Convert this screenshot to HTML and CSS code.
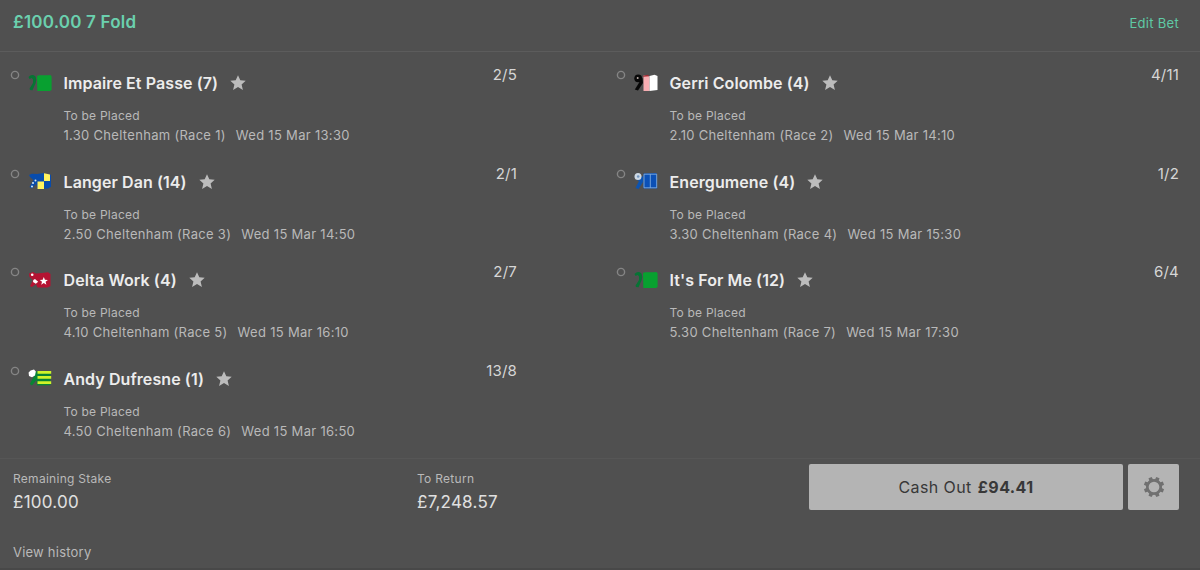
FILE: index.html
```
<!DOCTYPE html>
<html lang="en">
<head>
<meta charset="utf-8">
<title>My Bets</title>
<link rel="stylesheet" href="styles.css">
</head>
<body>
<svg width="0" height="0" class="defs">
  <symbol id="ring" viewBox="0 0 10 10"><circle cx="5" cy="5" r="3.6" fill="none" stroke="#858585" stroke-width="1.4"/></symbol>
  <symbol id="star" viewBox="0 0 16 16"><path fill="#bcbcbc" d="M8 .3l2.300 5 5.400.5-4.100 3.600 1.300 5.500L8 12.100l-4.900 2.800 1.300-5.500L.3 5.800l5.400-.5z"/></symbol>
  <symbol id="silk-green" viewBox="0 0 24 18"><path fill="#067434" d="M.5 3Q4-.5 7.500 2.500L8.300 6 7.500 9.500 4.500 16.300 2 16 1.600 14.500 5 9 5 5.500 3.800 4 1.500 5z"/><path fill="#08a030" d="M9 2L11 1.300h8.500L22.500 1 23.600 2.500V16L22 17H9.300z"/></symbol>
</svg>
<div class="slip">
  <header class="head"><span class="title">£100.00 7 Fold</span><span class="edit">Edit Bet</span></header>
  <main class="bets">
    <article class="bet">
      <svg class="ring"><use href="#ring"/></svg><svg class="silk"><use href="#silk-green"/></svg>
      <div class="info"><h2 class="name"><span>Impaire Et Passe (7)</span><svg class="star"><use href="#star"/></svg></h2><p class="market">To be Placed</p><p class="race"><span>1.30 Cheltenham (Race 1)</span><span>Wed 15 Mar 13:30</span></p></div>
      <span class="odds">2/5</span>
    </article>
    <article class="bet">
      <svg class="ring"><use href="#ring"/></svg>
      <svg class="silk" viewBox="0 0 24 18"><path fill="#080808" d="M8.500 4L9 9 4 16.500.8 15.500 5.500 8z"/><circle cx="4.200" cy="4.300" r="3.900" fill="#080808"/><circle cx="3.700" cy="4" r="1" fill="#b9aaa5"/><path fill="#f7adb2" d="M9.500 1.500l6 .7V17h-6z"/><path fill="#fff" d="M15.500 2l5-1.300 3 1.300v14l-8 1z"/><path d="M8.500 2L14 .8l1 1.400-5.500.5z" fill="#a62931"/></svg>
      <div class="info"><h2 class="name"><span>Gerri Colombe (4)</span><svg class="star"><use href="#star"/></svg></h2><p class="market">To be Placed</p><p class="race"><span>2.10 Cheltenham (Race 2)</span><span>Wed 15 Mar 14:10</span></p></div>
      <span class="odds">4/11</span>
    </article>
    <article class="bet">
      <svg class="ring"><use href="#ring"/></svg>
      <svg class="silk" viewBox="0 0 24 18"><path fill="#084cac" d="M1 3l3-1.200L9 2l7-1v1l7 .7v12L20 16.500l-10 .5-2-5-4 4.500L1.500 15l4-7-3.500-3z"/><path fill="#fff25e" d="M16 1.300l6 1.200V9h-6zM9.500 9.500H16V17H9.500z"/><circle cx="7.500" cy="8.500" r="1" fill="#d8e9f2"/><circle cx="5" cy="11" r="1" fill="#d8e9f2"/><circle cx="4" cy="14.500" r="1" fill="#d8e9f2"/></svg>
      <div class="info"><h2 class="name"><span>Langer Dan (14)</span><svg class="star"><use href="#star"/></svg></h2><p class="market">To be Placed</p><p class="race"><span>2.50 Cheltenham (Race 3)</span><span>Wed 15 Mar 14:50</span></p></div>
      <span class="odds">2/1</span>
    </article>
    <article class="bet">
      <svg class="ring"><use href="#ring"/></svg>
      <svg class="silk" viewBox="0 0 24 18"><path fill="#0c53b0" d="M3 8l6-4v6l-4.500 7-3-1L5 9z"/><circle cx="4" cy="4.500" r="3.500" fill="#cdd9e5"/><circle cx="4.200" cy="4.500" r="1.300" fill="#7396bf"/><path fill="#0b50b6" d="M9.500 1.500L22.500 1l.7 15.500H9.500z"/><path fill="none" stroke="#8db8e4" stroke-width=".8" d="M10 2.200h12.700v13.600H10zM16.300 2.200v13.600"/></svg>
      <div class="info"><h2 class="name"><span>Energumene (4)</span><svg class="star"><use href="#star"/></svg></h2><p class="market">To be Placed</p><p class="race"><span>3.30 Cheltenham (Race 4)</span><span>Wed 15 Mar 15:30</span></p></div>
      <span class="odds">1/2</span>
    </article>
    <article class="bet">
      <svg class="ring"><use href="#ring"/></svg>
      <svg class="silk" viewBox="0 0 24 18"><path fill="#b51332" d="M1 2.500L5 1l3 1.500L14 2l6-.8L22.500 3v12l-3 1.500H9.500L8 13l-4 3-2-1 3-6-3.500-3z"/><circle cx="4.200" cy="3.800" r="1.300" fill="#fff"/><path fill="#fff" d="M7 8l1.700 1.400 1.500 1.300L7.800 12.800 5 11l.3-2zM15.800 6l1.100 2.700 3 .2-2.300 1.900.8 2.900-2.600-1.600-2.600 1.600.8-2.900-2.300-1.900 3-.2z"/></svg>
      <div class="info"><h2 class="name"><span>Delta Work (4)</span><svg class="star"><use href="#star"/></svg></h2><p class="market">To be Placed</p><p class="race"><span>4.10 Cheltenham (Race 5)</span><span>Wed 15 Mar 16:10</span></p></div>
      <span class="odds">2/7</span>
    </article>
    <article class="bet">
      <svg class="ring"><use href="#ring"/></svg><svg class="silk"><use href="#silk-green"/></svg>
      <div class="info"><h2 class="name"><span>It's For Me (12)</span><svg class="star"><use href="#star"/></svg></h2><p class="market">To be Placed</p><p class="race"><span>5.30 Cheltenham (Race 7)</span><span>Wed 15 Mar 17:30</span></p></div>
      <span class="odds">6/4</span>
    </article>
    <article class="bet">
      <svg class="ring"><use href="#ring"/></svg>
      <svg class="silk" viewBox="0 0 24 18"><path fill="#078335" d="M7 4l2-2 13.500.5v13.800L9 16.500 8.500 11 4 16.500 1.800 15 5.500 8z"/><path fill="#fff" d="M.6 3.500l2-2L6 .6l1.800 2-.8 4L4 8.300 1 7z"/><path fill="#cff329" d="M9.500 2h13.700v2.700H9.500zM9.500 7h13.700v2.700H9.500zM9.500 12.200h13.700v2.700H9.500z"/></svg>
      <div class="info"><h2 class="name"><span>Andy Dufresne (1)</span><svg class="star"><use href="#star"/></svg></h2><p class="market">To be Placed</p><p class="race"><span>4.50 Cheltenham (Race 6)</span><span>Wed 15 Mar 16:50</span></p></div>
      <span class="odds">13/8</span>
    </article>
  </main>
  <footer class="foot">
    <div class="totals">
      <div class="total"><span class="label">Remaining Stake</span><span class="amount">£100.00</span></div>
      <div class="total"><span class="label">To Return</span><span class="amount">£7,248.57</span></div>
      <button class="cash"><span>Cash Out</span><b>£94.41</b></button>
      <button class="settings" aria-label="Settings"><svg width="22" height="22" viewBox="-11 -11 22 22"><g fill="#707070"><g id="teeth"><path d="M-2-7l.3-3.200h3.400L2-7z" transform="rotate(22.500)"/><path d="M-2-7l.3-3.200h3.400L2-7z" transform="rotate(67.500)"/><path d="M-2-7l.3-3.200h3.400L2-7z" transform="rotate(112.500)"/><path d="M-2-7l.3-3.200h3.400L2-7z" transform="rotate(157.500)"/></g><use href="#teeth" transform="rotate(180)"/></g><circle r="6.700" fill="none" stroke="#707070" stroke-width="2.700"/></svg></button>
    </div>
    <span class="history">View history</span>
  </footer>
</div>
</body>
</html>
```
FILE: styles.css
```
* { box-sizing: border-box; }
body { margin: 0; background: #505050; font-family: Inter, "Liberation Sans", sans-serif; color: #b9b9b9; }
h2, p { margin: 0; }
button { border: 0; padding: 0; font: inherit; }
.defs { position: absolute; }
.slip { height: 570px; overflow: hidden; border-bottom: 2px solid #484848; }
.head { height: 52px; padding: 0 21px 8px 13px; display: flex; justify-content: space-between; align-items: center; border-bottom: 1px solid #5c5c5c; }
.title { font-size: 17px; font-weight: 600; letter-spacing: .2px; color: #6bd0ae; }
.edit { font-size: 13px; letter-spacing: .3px; color: #5fcaa5; padding-top: 2px; }
.bets { display: grid; grid-template-columns: 606px 594px; grid-auto-rows: 98.600px; height: 406px; }
.bet { display: flex; align-items: flex-start; padding: 0 21px 0 10px; }
.bet:nth-child(odd) { padding-right: 89px; }
.ring { width: 10px; height: 10px; margin-top: 18px; }
.silk { width: 24px; height: 18px; margin: 21.500px 0 0 8px; }
.info { flex: 1; padding: 19px 0 0 11.500px; }
.name { display: flex; align-items: center; gap: 12px; height: 24px; font-size: 16px; font-weight: 600; line-height: 24px; letter-spacing: .09px; color: #ececec; }
.star { width: 16px; height: 16px; }
.market { margin-top: 11px; font-size: 12px; line-height: 20px; letter-spacing: .22px; }
.race { display: flex; gap: 10px; font-size: 13px; line-height: 18px; letter-spacing: .3px; }
.odds { margin-top: 13px; font-size: 15px; line-height: 20px; letter-spacing: .2px; color: #d6d6d6; }
.foot { border-top: 1px solid #565656; padding: 5px 21px 0 13px; }
.totals { display: grid; grid-template-columns: 404px 392px 314px 56px; height: 46px; justify-content: start; }
.total { display: flex; flex-direction: column; padding-top: 5px; }
.label { font-size: 12px; line-height: 20px; letter-spacing: .28px; }
.amount { font-size: 17px; line-height: 26px; letter-spacing: .25px; color: #e0e0e0; }
.cash { width: 314px; height: 46px; display: flex; align-items: center; justify-content: center; gap: 6px; background: #b4b4b4; border-radius: 2px; color: #383838; font-size: 16px; letter-spacing: .4px; }
.cash b { font-weight: 700; }
.settings { width: 51px; height: 46px; margin-left: 5px; display: flex; align-items: center; justify-content: center; background: #b4b4b4; border-radius: 2px; }
.history { display: block; margin-top: 32px; font-size: 13px; line-height: 20px; letter-spacing: .22px; }
```
